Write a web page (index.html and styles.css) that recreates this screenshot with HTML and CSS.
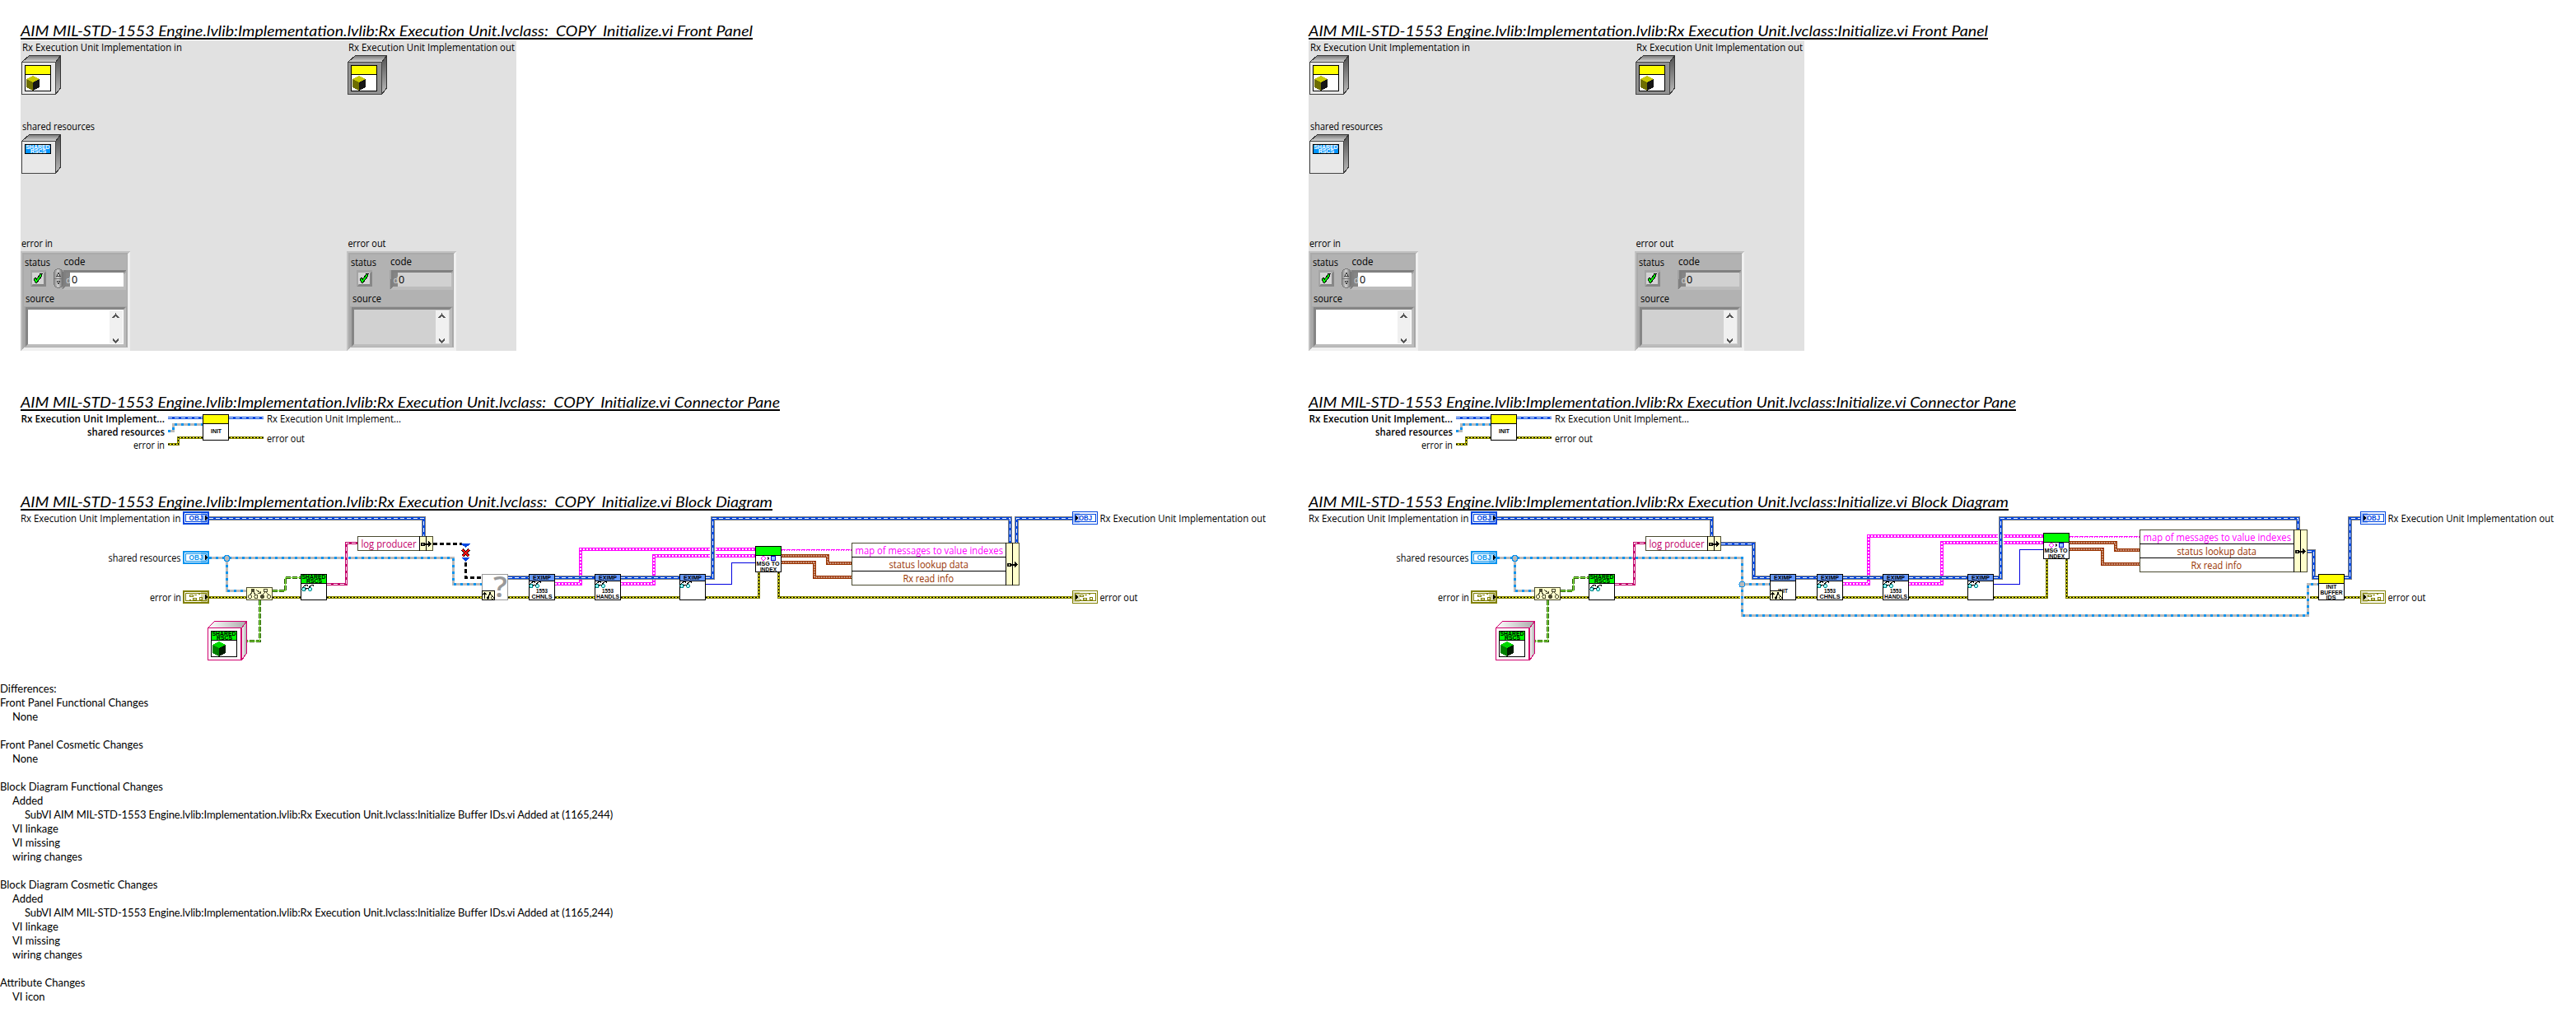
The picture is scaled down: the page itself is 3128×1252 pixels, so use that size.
FILE: index.html
```html
<!DOCTYPE html>
<html lang="en">
<head>
<meta charset="utf-8">
<title>VI Compare Report</title>
<link rel="stylesheet" href="styles.css">
</head>
<body>
<svg class="defs" width="0" height="0" aria-hidden="true">
  <defs>
    <linearGradient id="gTop" x1="0" x2="0" y1="0" y2="1"><stop offset="0" stop-color="#777"/><stop offset="1" stop-color="#d8d8d8"/></linearGradient>
    <linearGradient id="gSide" x1="0" x2="0" y1="0" y2="1"><stop offset="0" stop-color="#505050"/><stop offset="1" stop-color="#bbb"/></linearGradient>
    <linearGradient id="gConst" x1="0" x2="1" y1="0" y2="0"><stop offset="0" stop-color="#fff"/><stop offset="1" stop-color="#aaa"/></linearGradient>
    <linearGradient id="gSpin" x1="0" x2="1" y1="0" y2="0"><stop offset="0" stop-color="#888"/><stop offset=".45" stop-color="#d0d0d0"/><stop offset="1" stop-color="#666"/></linearGradient>

    <g id="crate">
      <path d="M.5 8.500 9.500 .5H47.500L41.500 8.500z" fill="url(#gTop)" stroke="#333"/>
      <path d="M41.500 8.500 47.500 .5V40L41.500 47.500z" fill="url(#gSide)" stroke="#333"/>
      <rect x=".5" y="8.500" width="41" height="39" stroke="#444"/>
    </g>
    <g id="cube">
      <path d="M0 4 8 0 16 4 8 8z" class="c1"/><path d="M0 4 8 8V18L0 14z" class="c2"/><path d="M16 4 8 8V18L16 14z" class="c3"/>
    </g>
    <g id="yellowClass">
      <rect x=".5" y=".5" width="31" height="31" fill="#fff" stroke="#000"/>
      <rect x="1" y="1" width="30" height="10" fill="#ff0"/><path d="M0 11.500H32" stroke="#000"/>
      <use href="#cube" x="2" y="13" class="olive"/>
    </g>
    <g id="glasses" fill="none" stroke="#000">
      <circle cx="3" cy="6.500" r="2" fill="#9ff" stroke="#088"/><circle cx="10.500" cy="6.500" r="2" fill="#9ff" stroke="#088"/>
      <path d="M1 5 5.500 1H7V3M5 6.500 7 5 8.500 6M9 4.500 13 1H14.500V3"/>
    </g>
    <g id="eximp">
      <rect x=".5" y=".5" width="31" height="31" fill="#fff" stroke="#000"/>
      <rect x="1" y="1" width="30" height="7" fill="#69f"/><path d="M0 8.500H32" stroke="#000"/>
      <text x="5" y="7" textLength="22" lengthAdjust="spacingAndGlyphs" class="px">EXIMP</text>
    </g>
    <g id="shTxt"><text x="1.500" y="6" textLength="29" lengthAdjust="spacingAndGlyphs" class="px">SHARED</text><text x="7" y="11" textLength="19" lengthAdjust="spacingAndGlyphs" class="px">RSCS</text></g>
    <g id="sharedVi">
      <rect x=".5" y=".5" width="31" height="31" fill="#fff" stroke="#000"/>
      <rect x="1" y="1" width="30" height="10" fill="#0f0"/><path d="M0 11.500H32" stroke="#000"/>
      <use href="#shTxt"/>
    </g>
    <g id="tree">
      <g fill="none" stroke="#4a4a30"><circle cx="8" cy="4" r="2" fill="#4a4a30"/><circle cx="23.500" cy="4" r="2"/><circle cx="4.500" cy="11.500" r="2"/><circle cx="12" cy="11.500" r="2"/><circle cx="19.500" cy="11.500" r="2" fill="#4a4a30"/><circle cx="27.500" cy="11.500" r="2"/><path d="M7 6 5 9M9 6 11 9M22.500 6 20.500 9M24.500 6 26.500 9M12 3 17 7M17 4.500V7.500H14"/></g>
    </g>
    <g id="miniTree">
      <rect x=".5" y=".5" width="15" height="11" fill="#ffc" stroke="#000"/>
      <path d="M3.500 10V3M1.500 5 3.500 3 5.500 5M10 3 8 8M10 3 13 8" fill="none" stroke="#000"/>
      <circle cx="10" cy="3" r="1.500"/><circle cx="7.500" cy="9" r="1.700"/><circle cx="13" cy="9" r="1.500" fill="#ffc" stroke="#000" stroke-width=".8"/>
    </g>
    <g id="termIn">
      <rect x="1" y="1" width="30" height="14" fill="#fff" stroke="currentColor" stroke-width="2"/>
      <rect x="3.500" y="3.500" width="25" height="9" fill="none" stroke="currentColor"/>
      <rect x="22" y="2" width="8" height="12" fill="currentColor" opacity=".32"/>
      <path d="M27 5V11L30 8z" fill="#000"/>
    </g>
    <g id="termOut">
      <rect x=".5" y=".5" width="30" height="15" fill="#fff" stroke="currentColor"/>
      <rect x="3.500" y="3.500" width="25" height="9" fill="none" stroke="currentColor"/>
      <rect x="1" y="2" width="8" height="12" fill="currentColor" opacity=".32"/>
      <path d="M4 5V11L7 8z" fill="#000"/>
    </g>
    <g id="clusterGlyph" fill="none" stroke="currentColor"><path d="M0 1.500H4V3.500H0zM6 1.500H9M11 .5H13M4 5.500H8V7.500H4zM0 7H2M12 4.500H15V7.500H12z"/></g>
    <g id="bundleArrow"><rect x="0" y="-2" width="5" height="4"/><rect x="1.500" y="-1" width="1.500" height="2" fill="#ffc"/><path d="M5 -1H9V-3.500L13 0 9 3.500V1H5z"/></g>

    <!-- error cluster: fixed parts -->
    <g id="clusterFrame">
      <rect width="133" height="121" fill="#f0f0f0"/><path d="M0 0H133L129 4V117H4L0 121z" fill="#c2c2c2"/><path d="M2 2H130V117H5L2 119z" fill="#aaa"/>
      <rect x="4" y="4" width="125" height="113" fill="#b2b2b2"/>
      <path d="M12 23H31V43H12z" fill="#a4a4a4"/><path d="M12 43H31V24z" fill="#878787"/><rect x="14" y="26" width="14" height="14" fill="#d4d4d4"/>
      <path d="M16 34 18 32.500 19.500 34 24 27.500H26L25 31 20 38H18z" fill="#0f0" stroke="#000"/>
      <path d="M4 67H129V116H4z" fill="#a6a6a6"/><path d="M6 68H127L125 71H9V113L6 115z" fill="#858585"/><path d="M9 113H125V71L128 68V116H6z" fill="#bcbcbc"/>
      <rect x="9" y="71" width="116" height="42" class="field"/>
      <rect x="108" y="72" width="16" height="40" fill="#f0f0f0"/>
      <path d="M112 81 115.500 77 119 81M112 106.500 115.500 110.500 119 106.500" fill="none" stroke="#555" stroke-width="2"/>
    </g>
    <g id="frontPanel">
      <rect x="25" y="49" width="602" height="377" fill="#e1e1e1"/>
      <g class="lbl">
        <text x="27" y="61.500" textLength="194" lengthAdjust="spacingAndGlyphs">Rx Execution Unit Implementation in</text>
        <text x="423" y="61.500" textLength="202" lengthAdjust="spacingAndGlyphs">Rx Execution Unit Implementation out</text>
        <text x="27" y="158" textLength="88" lengthAdjust="spacingAndGlyphs">shared resources</text>
        <text x="26" y="300" textLength="38" lengthAdjust="spacingAndGlyphs">error in</text>
        <text x="422.500" y="300" textLength="46" lengthAdjust="spacingAndGlyphs">error out</text>
      </g>
      <use href="#crate" x="26" y="67" fill="#e8e8e8"/><use href="#yellowClass" x="30" y="79"/>
      <use href="#crate" x="422" y="67" fill="#929292"/><use href="#yellowClass" x="426" y="79"/>
      <use href="#crate" x="26" y="163" fill="#e8e8e8"/>
      <g transform="translate(30 175)"><rect x=".5" y=".5" width="31" height="11" fill="#0094ff" stroke="#000"/><use href="#shTxt" class="white"/></g>
      <use href="#clusterFrame" x="25" y="305" class="fWhite"/>
      <use href="#clusterFrame" x="421" y="305" class="fGray"/>
      <path d="M75 328H153V351H75z" fill="#a2a2a2"/><path d="M77 328H153L150 331H80V348L76 351z" fill="#808080"/><path d="M75 352H153V330L150 333V348H80z" fill="#bcbcbc"/><rect x="85" y="331" width="65" height="17" fill="#fff"/><rect x="80" y="331" width="5" height="17" fill="#858585"/>
      <rect x="65.500" y="326.500" width="11" height="23" rx="5.500" fill="url(#gSpin)" stroke="#777"/><path d="M66 338H76" stroke="#777"/><path d="M69 335 71 331 73 335zM69 341 71 345 73 341z" fill="none" stroke="#444"/>
      <path d="M473 328H550V351H473z" fill="#a2a2a2"/><path d="M475 328H550L548 331H478V348L474 351z" fill="#808080"/><path d="M473 352H550V330L548 333V348H478z" fill="#bcbcbc"/><rect x="483" y="331" width="65" height="17" fill="#d1d1d1"/><rect x="478" y="331" width="5" height="17" fill="#858585"/>
      <g class="lbl">
        <text x="30" y="323" textLength="31" lengthAdjust="spacingAndGlyphs">status</text><text x="77.500" y="322" textLength="26" lengthAdjust="spacingAndGlyphs">code</text><text x="31" y="367" textLength="35" lengthAdjust="spacingAndGlyphs">source</text>
        <text x="426" y="323" textLength="31" lengthAdjust="spacingAndGlyphs">status</text><text x="474" y="322" textLength="26" lengthAdjust="spacingAndGlyphs">code</text><text x="428" y="367" textLength="35" lengthAdjust="spacingAndGlyphs">source</text>
        <text x="87" y="344">0</text><text x="484" y="344">0</text>
      </g>
      <text x="80" y="343.500" class="radix">d</text><text x="477.500" y="343.500" class="radix">d</text>
    </g>

    <path id="cpObj" d="M204 507.500H246M278 507.500H320"/>
    <path id="cpShr" d="M204 523.500H210.500V515.500H246"/>
    <path id="cpErr" d="M204 539.500H216.500V531.500H246M278 531.500H320"/>
    <g id="connector">
      <use href="#cpObj" class="o2"/><use href="#cpObj" class="o3"/>
      <use href="#cpShr" class="s1"/><use href="#cpShr" class="s2"/>
      <use href="#cpErr" class="e1"/><use href="#cpErr" class="e2"/><use href="#cpErr" class="e3"/>
      <rect x="246.500" y="503.500" width="31" height="31" fill="#fff" stroke="#000"/><rect x="247" y="504" width="30" height="10" fill="#ff0"/><path d="M246 514.500H278" stroke="#000"/>
      <text x="256" y="526" textLength="13" lengthAdjust="spacingAndGlyphs" class="px">INIT</text>
      <g class="lbl">
        <text x="25.500" y="512.500" textLength="174.500" lengthAdjust="spacingAndGlyphs" class="b">Rx Execution Unit Implement...</text>
        <text x="106" y="528.500" textLength="94" lengthAdjust="spacingAndGlyphs" class="b">shared resources</text>
        <text x="162" y="544.500" textLength="38" lengthAdjust="spacingAndGlyphs">error in</text>
        <text x="324" y="512.500" textLength="163" lengthAdjust="spacingAndGlyphs">Rx Execution Unit Implement...</text>
        <text x="324" y="536.500" textLength="46" lengthAdjust="spacingAndGlyphs">error out</text>
      </g>
    </g>

    <path id="grn" d="M331 717.500H346.500V701.500H365M315.500 729V778.500H300"/>
    <path id="pnk" d="M397 709.500H420.500V659.500H434"/>
    <g id="common">
      <use href="#grn" class="g1"/><use href="#grn" class="g2"/>
      <use href="#pnk" class="p1"/><use href="#pnk" class="p2"/>
      <g class="lbl">
        <text x="25" y="634" textLength="194.500" lengthAdjust="spacingAndGlyphs">Rx Execution Unit Implementation in</text>
        <text x="131.500" y="682" textLength="88" lengthAdjust="spacingAndGlyphs">shared resources</text>
        <text x="182" y="730" textLength="38" lengthAdjust="spacingAndGlyphs">error in</text>
        <text x="1335.500" y="634" textLength="201.500" lengthAdjust="spacingAndGlyphs">Rx Execution Unit Implementation out</text>
        <text x="1335.500" y="730" textLength="46" lengthAdjust="spacingAndGlyphs">error out</text>
      </g>
      <g class="cObj"><use href="#termIn" x="222" y="621"/><text x="229.500" y="632" textLength="17" lengthAdjust="spacingAndGlyphs" class="ty">OBJ</text></g>
      <g class="cShr"><use href="#termIn" x="222" y="669"/><text x="229.500" y="680" textLength="17" lengthAdjust="spacingAndGlyphs" class="ty">OBJ</text></g>
      <g class="cErr"><use href="#termIn" x="222" y="717"/><use href="#clusterGlyph" x="230" y="721"/></g>
      <g class="cObj"><use href="#termOut" x="1302" y="621"/><text x="1310" y="632" textLength="16" lengthAdjust="spacingAndGlyphs" class="ty">OBJ</text></g>
      <g class="cErr"><use href="#termOut" x="1302" y="717"/><use href="#clusterGlyph" x="1311" y="721"/></g>
      <circle cx="275.500" cy="678" r="3.500" fill="#b9b9b9" stroke="#0a93ee"/>
      <rect x="299.500" y="713.500" width="31" height="15" fill="#ffc" stroke="#4a4a30"/><use href="#tree" x="299" y="713"/>
      <use href="#sharedVi" x="365" y="697"/><use href="#glasses" x="366" y="709"/>
      <path d="M252.500 762.500 260.500 754.500H299.500L293.500 762.500z" fill="url(#gConst)" stroke="#d0006f"/>
      <path d="M293.500 762.500 299.500 754.500V793L293.500 801.500z" fill="url(#gConst)" stroke="#d0006f"/>
      <rect x="252.500" y="762.500" width="41" height="39" fill="#fff" stroke="#d0006f"/><path d="M292.500 762V801" stroke="#d0006f"/>
      <use href="#sharedVi" x="256" y="766"/><use href="#cube" x="258" y="779" class="green"/>
      <rect x="434.500" y="651.500" width="91" height="17" fill="#fff" stroke="#4a4a30"/><rect x="510" y="652" width="15" height="16" fill="#ffc"/><path d="M509.500 651V669M517.500 651V669" stroke="#000"/>
      <use href="#bundleArrow" x="511" y="660.500"/>
      <text x="438.500" y="664.500" textLength="67" lengthAdjust="spacingAndGlyphs" class="nm" fill="#c2006a">log producer</text>
    </g>
    <g id="vis">
      <g transform="translate(642 697)"><use href="#eximp"/><use href="#glasses" y="8"/><text x="9" y="23" textLength="14" lengthAdjust="spacingAndGlyphs" class="px">1553</text><text x="3.500" y="30" textLength="25" lengthAdjust="spacingAndGlyphs" class="px">CHNLS</text></g>
      <g transform="translate(722 697)"><use href="#eximp"/><use href="#glasses" y="8"/><text x="9" y="23" textLength="14" lengthAdjust="spacingAndGlyphs" class="px">1553</text><text x="2" y="30" textLength="28" lengthAdjust="spacingAndGlyphs" class="px">HANDLS</text></g>
      <g transform="translate(825 697)"><use href="#eximp"/><use href="#glasses" y="8"/></g>
    </g>

    <!-- index lookup: VI, result wires and bundler -->
    <path id="br" d="M949 675H1005V684H1034M949 683H989V701H1034"/>
    <g id="lookup">
      <use href="#br" class="b1"/><use href="#br" class="b2"/>
      <path d="M949 667.500H1034" class="m3"/><path d="M949 668.500H1034" class="m4"/>
      <g transform="translate(917 663)">
        <rect x=".5" y=".5" width="31" height="31" fill="#fff" stroke="#000"/><rect x="1" y="1" width="30" height="10" fill="#0f0"/><path d="M0 11.500H32" stroke="#000"/>
        <circle cx="10" cy="15" r="2.200" fill="#fff" stroke="#f0f"/><path d="M15 12.500V17.500L18 15z" fill="#333"/><rect x="19.500" y="12.500" width="5" height="5" fill="#9cf" stroke="#00c"/>
        <text x="1.500" y="24" textLength="28" lengthAdjust="spacingAndGlyphs" class="px">MSG TO</text><text x="6" y="30.500" textLength="20" lengthAdjust="spacingAndGlyphs" class="px">INDEX</text>
      </g>
      <rect x="1034.500" y="659.500" width="203" height="51" fill="#fff" stroke="#4a4a30"/><rect x="1222" y="660" width="15" height="50" fill="#ffc"/>
      <path d="M1221.500 659V711M1229.500 659V711M1034 676.500H1222M1034 693.500H1222" stroke="#000"/>
      <use href="#bundleArrow" x="1223" y="685.500"/>
      <text x="1038.500" y="672.500" textLength="179.500" lengthAdjust="spacingAndGlyphs" class="nm" fill="#f0f">map of messages to value indexes</text>
      <text x="1079.500" y="689.500" textLength="96.500" lengthAdjust="spacingAndGlyphs" class="nm" fill="#993300">status lookup data</text>
      <text x="1096.500" y="706.500" textLength="61.500" lengthAdjust="spacingAndGlyphs" class="nm" fill="#993300">Rx read info</text>
    </g>

    <path id="lObj" d="M254 629.500H514.500V652M617 701.500H642M674 701.500H722M754 701.500H825M857 701.500H865.500V629.500H1226.500V660M1302 629.500H1234.500V660"/>
    <path id="lShr" d="M254 677.500H418M423 677.500H550.500V709.500H585M275.500 678V717.500H299"/>
    <path id="lErr" d="M254 725.500H299M331 725.500H365M397 725.500H585M617 725.500H642M674 725.500H722M754 725.500H825M857 725.500H921.500V695M945.500 695V725.500H1302"/>
    <path id="lMag" d="M674 709H705V667H862M869 667H917M754 709H794V675H862M869 675H917"/>
    <path id="rObj" d="M254 629.500H514.500V652M526 660.500H565.500V701.500H585M617 701.500H642M674 701.500H722M754 701.500H825M857 701.500H865.500V629.500H1226.500V644M1238 669.500H1245.500V701.500H1251M1283 701.500H1289.500V629.500H1302"/>
    <path id="rShr" d="M254 677.500H551.500V747.500H1238.500V709.500H1251M551.500 709.500H585M275.500 678V717.500H299"/>
    <path id="rErr" d="M254 725.500H299M331 725.500H365M397 725.500H549M554 725.500H585M617 725.500H642M674 725.500H722M754 725.500H825M857 725.500H921.500V679M945.500 679V725.500H1236M1241 725.500H1251M1283 725.500H1302"/>
    <path id="rMag" d="M674 709H705V651H862M869 651H917M754 709H794V659H862M869 659H917"/>
  </defs>
</svg>

<main class="report">
  <div class="compare">
    <article class="side">
      <section>
        <h2 class="title"><svg width="889" height="20"><text x="0" y="18" textLength="889" lengthAdjust="spacingAndGlyphs">AIM MIL-STD-1553 Engine.lvlib:Implementation.lvlib:Rx Execution Unit.lvclass:  COPY  Initialize.vi Front Panel</text></svg></h2>
        <svg class="figure" width="1564" height="429" viewBox="0 48 1564 429"><use href="#frontPanel"/></svg>
      </section>
      <section>
        <h2 class="title"><svg width="922" height="20"><text x="0" y="18" textLength="922" lengthAdjust="spacingAndGlyphs">AIM MIL-STD-1553 Engine.lvlib:Implementation.lvlib:Rx Execution Unit.lvclass:  COPY  Initialize.vi Connector Pane</text></svg></h2>
        <svg class="figure" width="1564" height="99" viewBox="0 499 1564 99"><use href="#connector"/></svg>
      </section>
      <section>
        <h2 class="title"><svg width="913" height="20"><text x="0" y="18" textLength="913" lengthAdjust="spacingAndGlyphs">AIM MIL-STD-1553 Engine.lvlib:Implementation.lvlib:Rx Execution Unit.lvclass:  COPY  Initialize.vi Block Diagram</text></svg></h2>
        <svg class="figure" width="1564" height="208" viewBox="0 620 1564 208">
          <use href="#lMag" class="m1"/><use href="#lMag" class="m2"/>
          <path d="M857 709.500H888.500V683.500H917" class="int"/>
          <use href="#lShr" class="s1"/><use href="#lShr" class="s2"/>
          <use href="#lErr" class="e1"/><use href="#lErr" class="e2"/><use href="#lErr" class="e3"/>
          <use href="#lObj" class="o1"/><use href="#lObj" class="o2"/><use href="#lObj" class="o3"/>
          <path d="M526 660.500H561M565 683V701.500H585" class="broken"/>
          <path d="M559 660H572L565.500 665zM560 677H571L565.500 682z" fill="#0047e0"/>
          <path d="M561.500 667.500 569.500 675.500M569.500 667.500 561.500 675.500" stroke="#000" stroke-width="4"/><path d="M561.500 667.500 569.500 675.500M569.500 667.500 561.500 675.500" stroke="#f01010" stroke-width="2.700"/>
          <use href="#common"/><use href="#vis"/><use href="#lookup"/>
          <rect x="585.500" y="697.500" width="31" height="31" fill="#fff" stroke="#999"/>
          <text x="599" y="725" textLength="17" lengthAdjust="spacingAndGlyphs" class="missing">?</text>
          <use href="#miniTree" x="585" y="717"/>
        </svg>
      </section>
    </article>
    <article class="side">
      <section>
        <h2 class="title"><svg width="825" height="20"><text x="0" y="18" textLength="825" lengthAdjust="spacingAndGlyphs">AIM MIL-STD-1553 Engine.lvlib:Implementation.lvlib:Rx Execution Unit.lvclass:Initialize.vi Front Panel</text></svg></h2>
        <svg class="figure" width="1564" height="429" viewBox="0 48 1564 429"><use href="#frontPanel"/></svg>
      </section>
      <section>
        <h2 class="title"><svg width="859" height="20"><text x="0" y="18" textLength="859" lengthAdjust="spacingAndGlyphs">AIM MIL-STD-1553 Engine.lvlib:Implementation.lvlib:Rx Execution Unit.lvclass:Initialize.vi Connector Pane</text></svg></h2>
        <svg class="figure" width="1564" height="99" viewBox="0 499 1564 99"><use href="#connector"/></svg>
      </section>
      <section>
        <h2 class="title"><svg width="850" height="20"><text x="0" y="18" textLength="850" lengthAdjust="spacingAndGlyphs">AIM MIL-STD-1553 Engine.lvlib:Implementation.lvlib:Rx Execution Unit.lvclass:Initialize.vi Block Diagram</text></svg></h2>
        <svg class="figure" width="1564" height="208" viewBox="0 620 1564 208">
          <use href="#rMag" class="m1"/><use href="#rMag" class="m2"/>
          <path d="M857 709.500H888.500V667.500H917" class="int"/>
          <use href="#rShr" class="s1"/><use href="#rShr" class="s2"/>
          <use href="#rErr" class="e1"/><use href="#rErr" class="e2"/><use href="#rErr" class="e3"/>
          <use href="#rObj" class="o1"/><use href="#rObj" class="o2"/><use href="#rObj" class="o3"/>
          <circle cx="551.500" cy="709.500" r="3.500" fill="#b9b9b9" stroke="#0a93ee"/>
          <use href="#common"/><use href="#vis"/><use href="#lookup" y="-16"/>
          <g transform="translate(585 697)"><use href="#eximp"/><text x="10" y="23" textLength="12" lengthAdjust="spacingAndGlyphs" class="px">INIT</text></g>
          <use href="#miniTree" x="585" y="717"/>
          <g transform="translate(1251 697)">
            <rect x=".5" y=".5" width="31" height="31" fill="#fff" stroke="#000"/><rect x="1" y="1" width="30" height="10" fill="#ff0"/><path d="M0 11.500H32" stroke="#000"/>
            <text x="9.500" y="18" textLength="13" lengthAdjust="spacingAndGlyphs" class="px">INIT</text><text x="2.500" y="24.500" textLength="27" lengthAdjust="spacingAndGlyphs" class="px">BUFFER</text><text x="9.500" y="30.500" textLength="12" lengthAdjust="spacingAndGlyphs" class="px">IDS</text>
          </g>
        </svg>
      </section>
    </article>
  </div>

  <section class="differences">
    <p>Differences:</p>
    <section><h3>Front Panel Functional Changes</h3><ul><li>None</li></ul></section>
    <section><h3>Front Panel Cosmetic Changes</h3><ul><li>None</li></ul></section>
    <section><h3>Block Diagram Functional Changes</h3>
      <ul><li>Added<ul><li class="long">SubVI AIM MIL-STD-1553 Engine.lvlib:Implementation.lvlib:Rx Execution Unit.lvclass:Initialize Buffer IDs.vi Added at (1165,244)</li></ul></li><li>VI linkage</li><li>VI missing</li><li>wiring changes</li></ul></section>
    <section><h3>Block Diagram Cosmetic Changes</h3>
      <ul><li>Added<ul><li class="long">SubVI AIM MIL-STD-1553 Engine.lvlib:Implementation.lvlib:Rx Execution Unit.lvclass:Initialize Buffer IDs.vi Added at (1165,244)</li></ul></li><li>VI linkage</li><li>VI missing</li><li>wiring changes</li></ul></section>
    <section><h3>Attribute Changes</h3><ul><li>VI icon</li></ul></section>
  </section>
</main>
</body>
</html>
```
FILE: styles.css
```css
* { box-sizing: border-box; }
body { margin: 0; background: #fff; color: #000; font: 12px "Open Sans", "Noto Sans", sans-serif; }
svg { display: block; }
.defs { height: 0; }
.report { display: flex; flex-direction: column; height: 1252px; }
.compare { display: grid; grid-template-columns: 1564px 1564px; padding-top: 26px; }

.title { width: fit-content; height: 22px; margin: 0 0 0 25px; border-bottom: 2px solid #000; }
.title svg { overflow: visible; }
.title text { font: italic 400 18px Lato, sans-serif; white-space: pre; }

.figure { shape-rendering: crispEdges; overflow: hidden; }

.lbl text { font: 12.5px "Open Sans", "Noto Sans", sans-serif; fill: #000; }
.lbl .b { font-weight: 600; }
.nm { font: 13px "Open Sans", "Noto Sans", sans-serif; }
.px { font: 600 6.5px "Liberation Sans", Arial, sans-serif; }
.ty { font: 700 9.5px "Liberation Sans", Arial, sans-serif; fill: currentColor; }
.radix { font: 10px "Open Sans", sans-serif; fill: #d8d8d8; }
.missing { font: 600 35px "Open Sans", sans-serif; fill: #999; }
.white { fill: #fff; }

.cObj { color: #0047e0; }
.cShr { color: #0a93ee; }
.cErr { color: #808000; }
.fWhite { fill: #fff; }
.fGray { fill: #d1d1d1; }

.olive { --a: #c8c800; --b: #6e6e00; --c: #161616; }
.green { --a: #00d800; --b: #008000; --c: #001c00; }
.c1 { fill: var(--a); }
.c2 { fill: var(--b); }
.c3 { fill: var(--c); }

/* Wires: each type is drawn as stacked strokes */
.o1, .o2, .o3, .s1, .s2, .e1, .e2, .e3, .g1, .g2, .p1, .p2, .m1, .m2, .m3, .m4, .b1, .b2, .int, .broken { fill: none; }
.o1 { stroke: #808080; stroke-width: 5; }
.o2 { stroke: #0047e0; stroke-width: 3; }
.o3 { stroke: #fff; stroke-width: 1; stroke-dasharray: 5 3; }
.s1 { stroke: #b9b9b9; stroke-width: 3; }
.s2 { stroke: #0a93ee; stroke-width: 3; stroke-dasharray: 3 5; }
.e1 { stroke: #808000; stroke-width: 3; }
.e2 { stroke: #ffff00; stroke-width: 1; }
.e3 { stroke: #000; stroke-width: 1; stroke-dasharray: 2 2; }
.g1 { stroke: #265c00; stroke-width: 3; stroke-dasharray: 6 2; }
.g2 { stroke: #8ef04a; stroke-width: 1; }
.p1 { stroke: #c2006a; stroke-width: 3; }
.p2 { stroke: #fff; stroke-width: 1; stroke-dasharray: 5 3; }
.m1 { stroke: #f0f; stroke-width: 4; }
.m2 { stroke: #fff; stroke-width: 2; stroke-dasharray: 2 2; }
.m3 { stroke: #f0f; stroke-width: 1; stroke-dasharray: 5 1; }
.m4 { stroke: #f0f; stroke-width: 1; stroke-dasharray: 1 2; }
.b1 { stroke: #993300; stroke-width: 4; }
.b2 { stroke: #fff; stroke-width: 2; stroke-dasharray: 1 1; opacity: .65; }
.int { stroke: #0000e0; stroke-width: 1; }
.broken { stroke: #000; stroke-width: 3; stroke-dasharray: 5 3; }

.differences { font: 13px/17px Lato, sans-serif; }
.differences p, .differences h3, .differences ul { margin: 0; padding: 0; font: inherit; list-style: none; }
.differences ul { padding-left: 15px; }
.differences section + section { margin-top: 17px; }
.long { white-space: nowrap; letter-spacing: -0.1px; }
```
